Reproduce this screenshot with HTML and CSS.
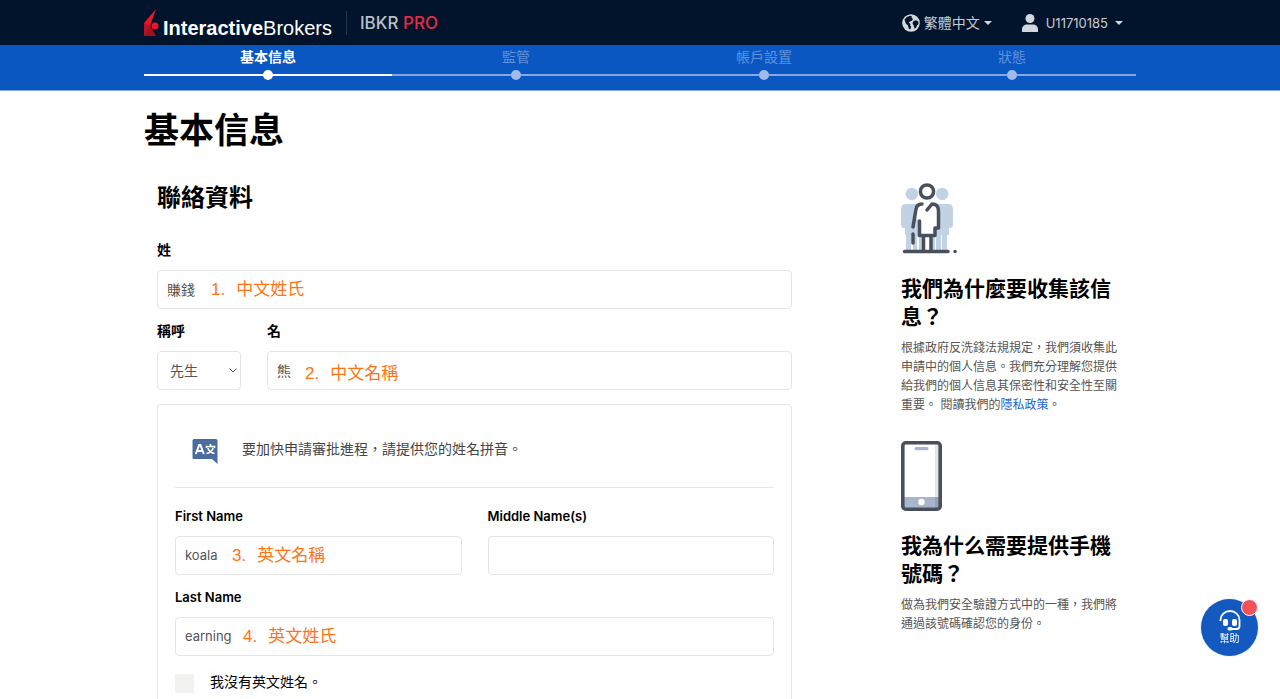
FILE: index.html
```html
<!DOCTYPE html>
<html lang="zh-Hant">
<head>
<meta charset="utf-8">
<meta name="viewport" content="width=device-width, initial-scale=1">
<title>基本信息</title>
<link rel="stylesheet" href="styles.css">
</head>
<body>
<header class="topbar">
  <div class="container topbar-inner">
    <a class="brand" href="#">
      <svg class="brand-mark" width="15" height="30" viewBox="0 0 15 30" aria-hidden="true">
        <path d="M12 1 0 15v13l6-10z" fill="#e8172c"/>
        <path d="M0 15v13h3l3.500-10z" fill="#b81225"/>
        <path d="M0 28 6 17.500 12 28z" fill="#a51020"/>
        <circle cx="11" cy="18" r="3.500" fill="#e8172c"/>
      </svg>
      <span class="brand-name"><strong>Interactive</strong>Brokers</span>
    </a>
    <span class="plan">IBKR <span class="plan-pro">PRO</span></span>
    <nav class="tools">
      <button class="tool" type="button">
        <svg width="18" height="18" viewBox="0 0 18 18" aria-hidden="true">
          <circle cx="9" cy="9" r="8.8" fill="#d3d7de"/>
          <path d="M2.500 5.500Q4.500 2.500 8 1.800l2 .7-.5 1.500 1.500.7-.8 1.800-2.200 1-1.200 1.200 1.700 1.400-.5 1.200 1.200 1.500-1 2.700-1.500-1-.7-3-2.200-2zM11.500 7l2.500-.8 2.300 1.300.2 2.500-1.500 1.500-1 2.500-1.500.5-.8-3-1.200-2z" fill="#02132c"/>
        </svg>
        <span class="tool-lang">繁體中文</span><span class="caret"></span>
      </button>
      <button class="tool" type="button">
        <svg width="16" height="18" viewBox="0 0 16 18" aria-hidden="true">
          <circle cx="8" cy="4.500" r="4.500" fill="#d3d7de"/>
          <path d="M0 18v-2.500C0 12 2.500 10.500 5 10.500h6c2.500 0 5 1.500 5 5V18z" fill="#d3d7de"/>
        </svg>
        <span class="tool-account">U11710185</span><span class="caret"></span>
      </button>
    </nav>
  </div>
</header>

<div class="progress">
  <ol class="container steps">
    <li class="step step-active">基本信息</li>
    <li class="step">監管</li>
    <li class="step">帳戶設置</li>
    <li class="step">狀態</li>
  </ol>
</div>

<main class="container">
  <h1>基本信息</h1>
  <div class="columns">
    <form class="contact">
      <h2>聯絡資料</h2>
      <div class="field">
        <label for="surname">姓</label>
        <input id="surname" type="text" value="賺錢">
        <span class="note note-1"><span>1.</span><span>中文姓氏</span></span>
      </div>
      <div class="name-row">
        <div class="field">
          <label for="title">稱呼</label>
          <select id="title"><option>先生</option><option>女士</option></select>
          <svg class="chevron" width="8" height="5" viewBox="0 0 8 5" aria-hidden="true"><path d="m.5.5 3.500 3.500L7.500.5" fill="none" stroke="#555" /></svg>
        </div>
        <div class="field">
          <label for="given">名</label>
          <input id="given" type="text" value="熊">
          <span class="note note-2"><span>2.</span><span>中文名稱</span></span>
        </div>
      </div>

      <section class="panel">
        <div class="panel-head">
          <svg width="26" height="25" viewBox="0 0 26 25" aria-hidden="true">
            <path d="M2 0h22a1.500 1.500 0 0 1 1.500 1.500V25L20 20H2a1.500 1.500 0 0 1-1.500-1.500v-17A1.500 1.500 0 0 1 2 0z" fill="#4a6c9f"/>
            <path d="m3.800 15 3.400-9h1.200l3.400 9M5.300 12h5" fill="none" stroke="#fff" stroke-width="2"/>
            <path d="M14.500 9V7.500h8V9M18.500 5v2.500M15.800 9c1 3 3.200 4.700 6.700 5.500M21.200 9c-1 3-3.200 4.700-6.700 5.500" fill="none" stroke="#fff" stroke-width="1.600"/>
          </svg>
          <p>要加快申請審批進程，請提供您的姓名拼音。</p>
        </div>
        <div class="pair">
          <div class="field">
            <label for="first">First Name</label>
            <input id="first" type="text" value="koala">
            <span class="note note-3"><span>3.</span><span>英文名稱</span></span>
          </div>
          <div class="field">
            <label for="middle">Middle Name(s)</label>
            <input id="middle" type="text">
          </div>
        </div>
        <div class="field">
          <label for="last">Last Name</label>
          <input id="last" type="text" value="earning">
          <span class="note note-4"><span>4.</span><span>英文姓氏</span></span>
        </div>
        <div class="check">
          <input id="no-english" type="checkbox">
          <label for="no-english">我沒有英文姓名。</label>
        </div>
      </section>
    </form>

    <aside class="side">
      <section class="info">
        <svg width="56" height="71" viewBox="0 0 56 71" aria-hidden="true">
          <g fill="#c2d2e5">
            <circle cx="10.800" cy="11" r="6.200"/><circle cx="41.200" cy="11" r="6.200"/>
            <path d="M5 21h16v47H5V52H4v-7H2q-2-1-2-3V26q0-5 5-5zM31 21h16q5 0 5 5v16q0 2-2 3h-2v7h-2v16H31z"/>
          </g>
          <path d="M15 23q4-3 11 0l5-2q6 1 6 6v17h-3v8H18V38l-4-4z" fill="#fff"/>
          <path d="M10 52h2v16h-2zM16 54h2v14h-2zM24 54h4v14h-4zM34 54h1v14h-1zM40 52h1v16h-1z" fill="#fff"/>
          <g fill="none" stroke="#47505c" stroke-width="3.500" stroke-linecap="round" stroke-linejoin="round">
            <circle cx="26" cy="8.500" r="6.600" fill="#fff"/>
            <path d="M21 21q-5 0-6 5l-3 18M12 51v9M18.500 38v14.500H34V45h3.500V28q0-7-6.500-7l-5 6M22.500 54v13M30 54v13M3.500 68.500h43.500M54 68.500h.1"/>
          </g>
        </svg>
        <h3>我們為什麼要收集該信息？</h3>
        <p>根據政府反洗錢法規規定，我們須收集此申請中的個人信息。我們充分理解您提供給我們的個人信息其保密性和安全性至關重要。 閱讀我們的<a href="#">隱私政策</a>。</p>
      </section>
      <section class="info">
        <svg width="41" height="70" viewBox="0 0 41 70" aria-hidden="true">
          <rect x="2" y="2" width="37" height="66" rx="3" fill="#fff"/>
          <path d="M3 56h35v11H3z" fill="#a9b5cd"/>
          <path d="M34 3h4v64h-4z" fill="#000" opacity=".1"/>
          <rect x="13.500" y="6" width="14" height="3.200" rx="1.600" fill="#a9b5cd"/>
          <circle cx="20.500" cy="61" r="3.200" fill="#fff"/>
          <rect x="1.800" y="1.800" width="37.400" height="66.400" rx="3" fill="none" stroke="#47505c" stroke-width="3.600"/>
        </svg>
        <h3>我為什么需要提供手機號碼？</h3>
        <p>做為我們安全驗證方式中的一種，我們將通過該號碼確認您的身份。</p>
      </section>
    </aside>
  </div>
</main>

<button class="help" type="button">
  <svg width="22" height="21" viewBox="0 0 22 21" aria-hidden="true">
    <path d="M1.500 11v-1a9.500 9 0 0 1 19 0v6q0 3-3 3H12" fill="none" stroke="#fff" stroke-width="1.800"/>
    <rect x="4" y="9" width="5" height="7" rx="2" fill="#fff"/><rect x="13" y="9" width="5" height="7" rx="2" fill="#fff"/>
    <rect x="8.500" y="17" width="5" height="3.500" rx="1.500" fill="#fff"/>
  </svg>
  <span>幫助</span>
  <span class="help-badge"></span>
</button>
</body>
</html>
```
FILE: styles.css
```css
* { box-sizing: border-box; }

body {
  margin: 0;
  background: #fff;
  color: #000;
  font-family: Inter, "Noto Sans CJK TC", sans-serif;
  font-size: 14px;
  line-height: 20px;
}

h1, h2, h3, p, ol { margin: 0; padding: 0; }
svg { display: block; flex: none; }
button, input, select { font: inherit; color: inherit; }

.container {
  width: 100%;
  max-width: 992px;
  margin: 0 auto;
}

/* Top bar */
.topbar { background: #02132c; }
.topbar-inner { display: flex; align-items: center; height: 45px; }
.brand {
  display: flex;
  gap: 4px;
  padding-right: 14px;
  border-right: 1px solid #26334a;
  height: 24px;
  align-items: center;
  color: #fff;
  text-decoration: none;
}
.brand-name {
  padding-top: 10px;
  font-family: "Liberation Sans", sans-serif;
  font-size: 20px;
  line-height: 24px;
}
.plan {
  padding-left: 13px;
  color: #b9bfc8;
  font-size: 17px;
  font-weight: 500;
}
.plan-pro { color: #e52b41; }
.tools { display: flex; gap: 30px; margin-left: auto; padding-right: 13px; }
.tool {
  display: flex;
  align-items: center;
  gap: 4px;
  padding: 0;
  border: 0;
  background: none;
  color: #c6cbd3;
}
.tool-account { padding: 0 3px 0 4px; font-size: 13px; }
.caret {
  border: 4px solid transparent;
  border-top-color: #d3d7de;
  border-bottom: 0;
}

/* Progress */
.progress { background: #0a57c2; border-bottom: 1px solid #84abe0; }
.steps { display: flex; height: 45px; list-style: none; }
.step {
  position: relative;
  flex: 1;
  height: 31px;
  padding-top: 2px;
  border-bottom: 2px solid #83a8e1;
  color: #5e91dc;
  text-align: center;
}
.step::after {
  content: "";
  position: absolute;
  left: calc(50% - 5px);
  bottom: -6px;
  width: 10px;
  height: 10px;
  border-radius: 50%;
  background: #a0bbea;
}
.step-active { border-color: #fff; color: #fff; font-weight: 700; }
.step-active::after { background: #fff; }

/* Main */
h1 { padding-top: 18px; font-size: 35px; line-height: 42px; font-weight: 700; }
.columns {
  display: grid;
  grid-template-columns: minmax(0, 1fr) 220px;
  gap: 109px;
  padding: 32px 15px 0 13px;
}
h2 { margin-bottom: 27px; font-size: 24px; line-height: 30px; }
.field { position: relative; margin-bottom: 12px; }
.field label {
  display: block;
  margin-bottom: 10px;
  font-size: 13px;
  font-weight: 600;
}
.contact > .field label, .name-row label { font-size: 14px; font-weight: 700; }
.field input, .field select {
  display: block;
  width: 100%;
  height: 39px;
  padding: 0 9px 2px;
  border: 1px solid #e3e5e7;
  border-radius: 4px;
  background: #fff;
  color: #555;
  font-size: 14px;
}
.panel .field input { font-size: 13px; }
.field select { padding: 0 12px; appearance: none; }
.chevron { position: absolute; right: 4px; bottom: 17px; }
.name-row { display: grid; grid-template-columns: 84px 1fr; gap: 26px; }

/* Orange notes placed over the inputs */
.note {
  position: absolute;
  display: flex;
  gap: 11px;
  bottom: 8px;
  color: #ff7314;
  font-family: "Liberation Sans", "Noto Sans CJK TC", sans-serif;
  font-size: 17px;
  line-height: 22px;
  pointer-events: none;
}
.note-1 { left: 54px; }
.note-2 { left: 38px; bottom: 5px; }
.note-3 { left: 57px; }
.note-4 { left: 68px; }

.panel {
  margin-top: 2px;
  padding: 0 17px 40px;
  border: 1px solid #e3e8ec;
  border-radius: 4px;
}
.panel-head {
  display: flex;
  gap: 24px;
  margin-bottom: 18px;
  padding: 34px 17px 23px;
  border-bottom: 1px solid #e6e8ea;
  color: #444;
}
.pair { display: grid; grid-template-columns: 1fr 1fr; gap: 26px; }
.check { display: flex; gap: 16px; padding-top: 6px; }
.check input {
  appearance: none;
  width: 19px;
  height: 19px;
  margin: 0;
  background: #f2f2f0;
}
.check label { line-height: 16px; }

/* Side */
.info { margin-bottom: 27px; }
.info h3 { margin: 21px 0 7px; font-size: 21px; line-height: 28px; }
.info section + section h3 { margin-top: 22px; }
.info p { color: #555; font-size: 12px; line-height: 19px; }
.info a { color: #1a62cf; text-decoration: none; }

/* Help */
.help {
  position: fixed;
  right: 22px;
  bottom: 43px;
  display: flex;
  flex-direction: column;
  align-items: center;
  width: 57px;
  height: 57px;
  padding: 11px 0 0;
  border: 0;
  border-radius: 50%;
  background: #1459c0;
  box-shadow: 0 0 2px #c3d3ea;
  color: #fff;
  font-size: 10px;
  line-height: 14px;
}
.help-badge {
  position: absolute;
  top: 0;
  right: 0;
  width: 17px;
  height: 17px;
  border: 1px solid #fff;
  border-radius: 50%;
  background: #f5515b;
}
```
